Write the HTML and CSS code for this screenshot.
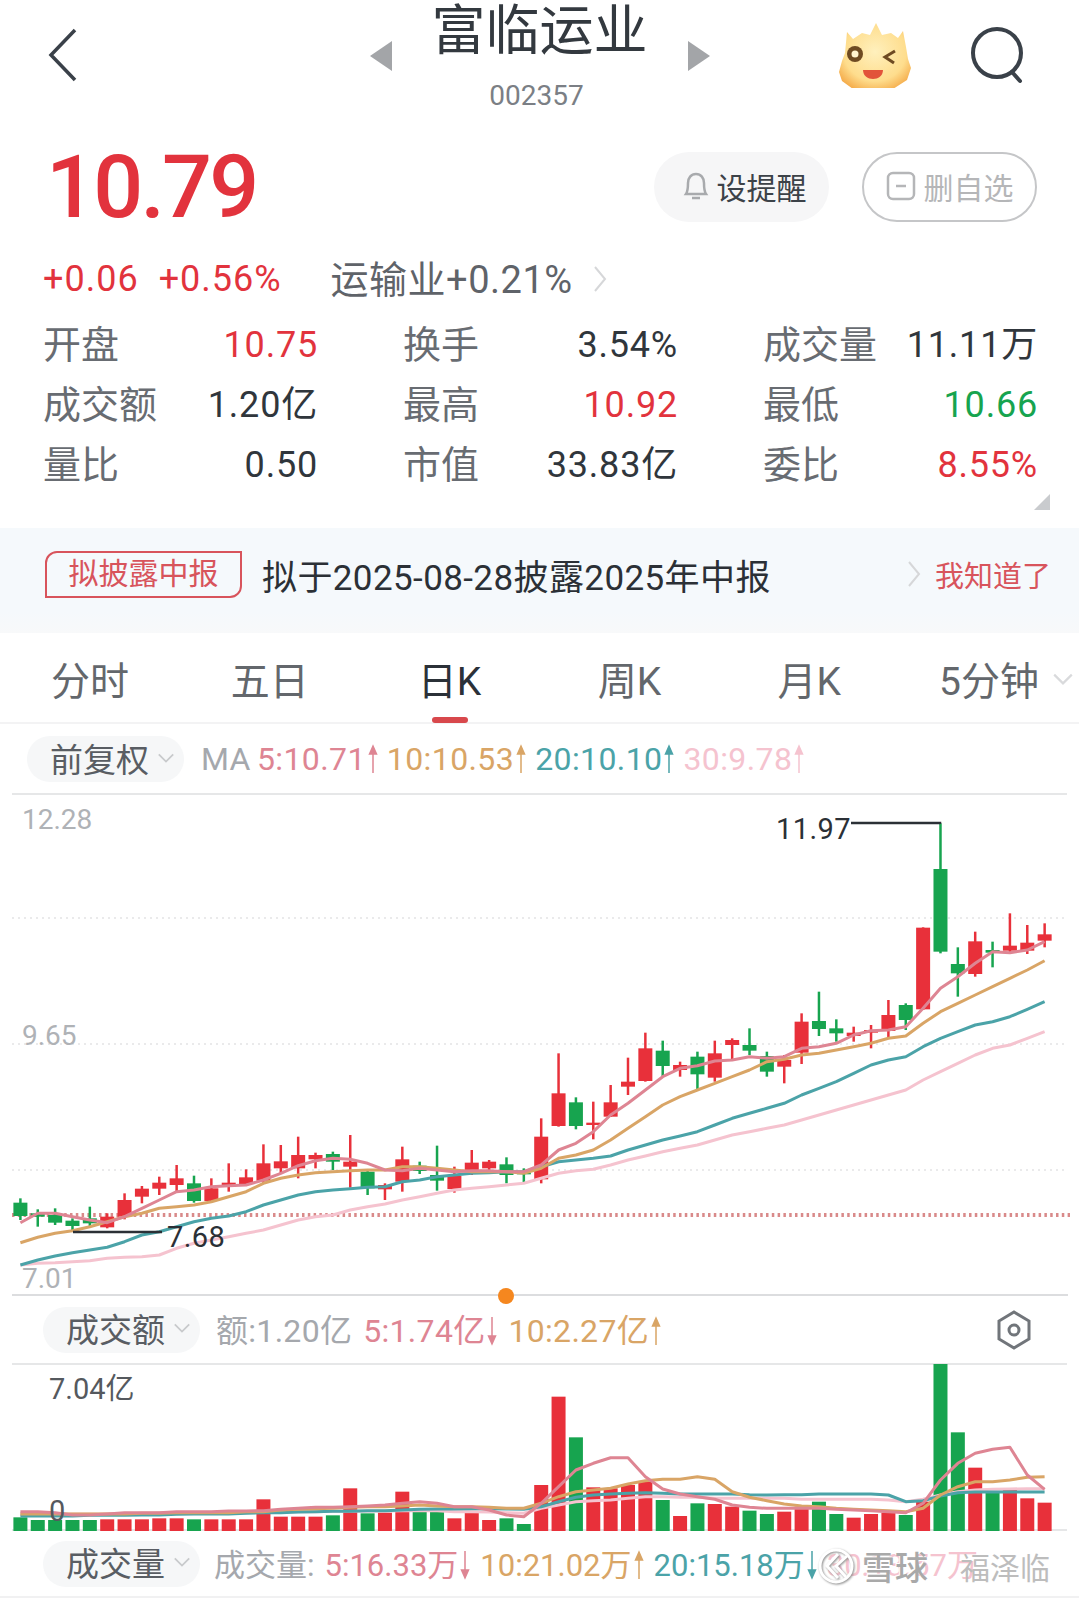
FILE: index.html
```html
<!DOCTYPE html>
<html lang="zh">
  <head>
    <meta charset="UTF-8" />
    <title>富临运业</title>
    <link rel="stylesheet" href="styles.css">
  </head>
  <body>
    <svg class="defs" width="0" height="0">
      <symbol id="up" viewBox="0 0 10 30"><path d="M5 29V3M1.500 10 5 2l3.500 8z" /></symbol>
      <symbol id="down" viewBox="0 0 10 30"><path d="M5 1v26M1.500 20 5 28l3.500-8z" /></symbol>
      <symbol id="caret" viewBox="0 0 20 12"><path d="M2 2l8 8 8-8" /></symbol>
    </svg>

    <div class="page">
      <!-- 顶部标题 -->
      <header class="topbar">
        <svg class="back" width="30" height="54" viewBox="0 0 30 54"><path d="M27 2 3 27l24 25" /></svg>
        <div class="title-box">
          <span class="tri tri-left"></span>
          <div class="title-text">
            <h1>富临运业</h1>
            <p>002357</p>
          </div>
          <span class="tri tri-right"></span>
        </div>
        <div class="top-right">
          <svg class="mascot" width="74" height="66" viewBox="0 0 74 66">
            <defs>
              <radialGradient id="face" cx="50%" cy="42%" r="62%">
                <stop offset="0" stop-color="#fff0bd" />
                <stop offset="0.7" stop-color="#fedd8d" />
                <stop offset="1" stop-color="#f5ad4c" />
              </radialGradient>
            </defs>
            <path fill="url(#face)" d="M9 10l6 7 9-6 8 2 6-12 6 12 9-2 7 5 5-7 3 16 2 12 3 9-4 12-14 9-20 2-20-2-11-8-3-9 3-11 3-8z" />
            <circle cx="17" cy="32" r="8" fill="#6e4a22" />
            <circle cx="17" cy="32" r="3.500" fill="#fff3d0" />
            <path class="wink" d="M57 29 47 35l9 6" />
            <path fill="#e2533a" d="M25 48h20c0 6-5 9-10 9s-10-3-10-9z" />
          </svg>
          <svg class="search" width="54" height="58" viewBox="0 0 54 58"><circle cx="27" cy="27" r="24" /><path d="M42 46l8 9" /></svg>
        </div>
      </header>

      <!-- 行情 -->
      <section class="quote">
        <div class="price-row">
          <div class="price">10.79</div>
          <div class="btns">
            <div class="pill pill-remind">
              <svg width="26" height="32" viewBox="0 0 26 32"><path d="M3 24c2-3 2-6 2-11 0-5 3-9 8-9s8 4 8 9c0 5 0 8 2 11zM9 28h8" /></svg>
              设提醒
            </div>
            <div class="pill pill-del">
              <svg width="30" height="30" viewBox="0 0 30 30"><rect x="2" y="2" width="26" height="26" rx="5" /><path d="M10 15h10" /></svg>
              删自选
            </div>
          </div>
        </div>
        <div class="change-row">
          <span class="up">+0.06</span>
          <span class="up">+0.56%</span>
          <span class="sector">运输业+0.21%</span>
          <svg class="more" width="14" height="28" viewBox="0 0 14 28"><path d="M2 2l10 12L2 26" /></svg>
        </div>
        <div class="stats">
          <div class="stat"><label>开盘</label><b class="up">10.75</b></div>
          <div class="stat"><label>换手</label><b>3.54%</b></div>
          <div class="stat"><label>成交量</label><b>11.11万</b></div>
          <div class="stat"><label>成交额</label><b>1.20亿</b></div>
          <div class="stat"><label>最高</label><b class="up">10.92</b></div>
          <div class="stat"><label>最低</label><b class="down">10.66</b></div>
          <div class="stat"><label>量比</label><b>0.50</b></div>
          <div class="stat"><label>市值</label><b>33.83亿</b></div>
          <div class="stat"><label>委比</label><b class="up">8.55%</b></div>
        </div>
        <div class="fold"></div>
      </section>

      <!-- 提示条 -->
      <section class="notice">
        <span class="tag">拟披露中报</span>
        <span class="notice-msg">拟于2025-08-28披露2025年中报</span>
        <svg class="more" width="14" height="28" viewBox="0 0 14 28"><path d="M2 2l10 12L2 26" /></svg>
        <span class="notice-ok">我知道了</span>
      </section>

      <nav class="tabs">
        <div class="tab">分时</div>
        <div class="tab">五日</div>
        <div class="tab active">日K</div>
        <div class="tab">周K</div>
        <div class="tab">月K</div>
        <div class="tab">5分钟<svg class="tab-caret"><use href="#caret" /></svg></div>
      </nav>

      <div class="ma-row">
        <div class="select select-ma">前复权<svg class="caret"><use href="#caret" /></svg></div>
        <div class="legend">
          <span class="c-gray ma-name">MA</span>
          <span class="c-5">5:10.71<svg class="arr"><use href="#up" /></svg></span>
          <span class="c-10">10:10.53<svg class="arr"><use href="#up" /></svg></span>
          <span class="c-20">20:10.10<svg class="arr"><use href="#up" /></svg></span>
          <span class="c-30">30:9.78<svg class="arr"><use href="#up" /></svg></span>
        </div>
      </div>

      <svg id="kline" class="chart chart-k" width="1079" height="503" viewBox="0 793 1079 503"></svg>

      <div class="sub-row">
        <span class="dot"></span>
        <div class="select">成交额<svg class="caret"><use href="#caret" /></svg></div>
        <div class="legend legend-amount">
          <span class="c-gray">额:1.20亿</span>
          <span class="c-5">5:1.74亿<svg class="arr"><use href="#down" /></svg></span>
          <span class="c-10">10:2.27亿<svg class="arr"><use href="#up" /></svg></span>
        </div>
        <svg class="hex" width="36" height="40" viewBox="0 0 36 40"><path d="M18 2l15 9v18l-15 9-15-9V11z" /><circle cx="18" cy="20" r="5" /></svg>
      </div>

      <svg id="volume" class="chart" width="1079" height="168" viewBox="0 1363 1079 168"></svg>

      <div class="sub-row sub-row-last">
        <div class="select">成交量<svg class="caret"><use href="#caret" /></svg></div>
        <div class="legend legend-vol">
          <span class="c-gray">成交量:</span>
          <span class="c-5">5:16.33万<svg class="arr"><use href="#down" /></svg></span>
          <span class="c-10">10:21.02万<svg class="arr"><use href="#up" /></svg></span>
          <span class="c-20">20:15.18万<svg class="arr"><use href="#down" /></svg></span>
          <span class="c-30">30:13.57万</span>
        </div>
        <!-- 水印 -->
        <div class="watermark">
          <svg width="38" height="38" viewBox="0 0 38 38"><circle cx="19" cy="19" r="16" /><path d="M21 7 10 19l11 12M30 9 19 19l10 11" /></svg>
          <span class="wm-brand">雪球</span>
          <span class="wm-name">福泽临</span>
        </div>
      </div>
    </div>

    <script src="chart.js"></script>
  </body>
</html>
```

FILE: styles.css
```css
* {
  box-sizing: border-box;
}
body {
  margin: 0;
  background: #fff;
  font-family: Roboto, "Noto Sans CJK SC", sans-serif;
  color: #30363c;
}
.defs {
  position: absolute;
}
.page {
  width: 1079px;
  overflow: hidden;
}
.up {
  color: #e2333d;
}
.down {
  color: #17a44f;
}

/* 顶部 */
.topbar {
  height: 125px;
  display: grid;
  grid-template-columns: 1fr auto 1fr;
}
.back {
  margin: 28px 0 0 48px;
}
.back path {
  fill: none;
  stroke: #3a4149;
  stroke-width: 3.500;
}
.title-box {
  display: flex;
  gap: 40px;
  align-items: flex-start;
}
.tri {
  width: 0;
  height: 0;
  margin-top: 41px;
  border-top: 15px solid transparent;
  border-bottom: 15px solid transparent;
}
.tri-left {
  border-right: 22px solid #a3a5a8;
}
.tri-right {
  border-left: 22px solid #a3a5a8;
}
.title-text {
  text-align: center;
  padding-top: 2px;
}
.title-text h1 {
  margin: 0;
  font-size: 54px;
  line-height: 60px;
  font-weight: 400;
  color: #33393f;
}
.title-text p {
  margin: 18px 6px 0 0;
  font-size: 28px;
  line-height: 32px;
  color: #7b7f85;
}
.top-right {
  display: flex;
  justify-content: flex-end;
  gap: 58px;
  padding: 22px 55px 0 0;
  align-items: flex-start;
}
.wink {
  fill: none;
  stroke: #6e4a22;
  stroke-width: 3;
}
.search {
  margin-top: 4px;
}
.search circle,
.search path {
  fill: none;
  stroke: #3a4149;
  stroke-width: 4;
  stroke-linecap: round;
}

/* 行情 */
.quote {
  height: 403px;
  padding-top: 27px;
}
.price-row {
  display: flex;
  justify-content: space-between;
  align-items: center;
  height: 70px;
  padding: 0 42px 0 46px;
}
.price {
  font-size: 88px;
  font-weight: 500;
  line-height: 70px;
  letter-spacing: -2.800px;
  color: #e2333d;
}
.btns {
  display: flex;
  gap: 33px;
}
.pill {
  width: 175px;
  height: 70px;
  border-radius: 35px;
  display: flex;
  align-items: center;
  justify-content: center;
  gap: 8px;
  padding-bottom: 3px;
  font-size: 30px;
}
.pill-remind {
  background: #f6f6f7;
  color: #3c4248;
  padding-left: 6px;
}
.pill-remind path {
  fill: none;
  stroke: #a8aaad;
  stroke-width: 2.500;
}
.pill-del {
  border: 2px solid #c5c6c8;
  color: #b5b6b8;
}
.pill-del rect,
.pill-del path {
  fill: none;
  stroke: #b5b6b8;
  stroke-width: 2.500;
}
.change-row {
  height: 58px;
  margin-top: 28px;
  padding-left: 43px;
  display: flex;
  align-items: center;
  gap: 20px;
  font-size: 36px;
  letter-spacing: 1px;
}
.sector {
  margin: 0 0 6px 29px;
  font-size: 38px;
  letter-spacing: .5px;
  color: #5f6369;
}
.more path {
  fill: none;
  stroke: #d6d7d9;
  stroke-width: 2;
}
.stats {
  display: grid;
  grid-template-columns: repeat(3, 274px);
  column-gap: 86px;
  padding-left: 43px;
  margin-top: 7px;
}
.stat {
  height: 60px;
  display: flex;
  justify-content: space-between;
  align-items: center;
}
.stat label {
  margin-bottom: 8px;
  font-size: 38px;
  color: #686c72;
}
.stat b {
  margin-right: -1px;
  font-size: 36px;
  line-height: 40px;
  font-weight: 400;
  letter-spacing: .8px;
}
.fold {
  width: 16px;
  height: 16px;
  margin: -1px 0 0 1034px;
  background: #c9cbce;
  clip-path: polygon(100% 0, 100% 100%, 0 100%);
}

/* 提示条 */
.notice {
  height: 105px;
  display: flex;
  align-items: center;
  padding: 0 28px 13px 45px;
  background: linear-gradient(#f5f9fc 80%, #f8f9fa);
}
.tag {
  width: 197px;
  height: 47px;
  border: 2px solid #d8545c;
  border-radius: 12px 0 12px 0;
  text-align: center;
  line-height: 41px;
  font-size: 30px;
  color: #d8545c;
}
.notice-msg {
  margin-left: 20px;
  font-size: 35px;
  letter-spacing: .4px;
  color: #2b3036;
}
.notice .more {
  margin-left: auto;
}
.notice-ok {
  margin-left: 14px;
  font-size: 29px;
  color: #d8545c;
}

/* tab */
.tabs {
  height: 91px;
  display: grid;
  grid-template-columns: repeat(6, 1fr);
  border-bottom: 2px solid #f3f3f4;
}
.tab {
  position: relative;
  padding-top: 19px;
  text-align: center;
  font-size: 39px;
  line-height: 60px;
  color: #63676c;
}
.tab.active {
  color: #2b3138;
}
.tab.active::after {
  content: "";
  display: block;
  width: 36px;
  height: 6px;
  margin: 5px auto 0;
  border-radius: 3px;
  background: #d8484c;
}
.tab-caret {
  position: absolute;
  right: 5px;
  top: 39px;
  width: 22px;
  height: 14px;
  fill: none;
  stroke: #d9dadc;
  stroke-width: 2;
}

/* 指标行 */
.ma-row {
  height: 69px;
  padding: 1px 0 0 27px;
  display: flex;
  align-items: center;
  gap: 17px;
}
.select {
  width: 157px;
  height: 46px;
  border-radius: 23px;
  background: #f6f7f8;
  display: flex;
  align-items: center;
  padding: 0 0 3px 23px;
  font-size: 33px;
  color: #595d63;
}
.caret {
  width: 18px;
  height: 12px;
  margin-left: 8px;
  fill: none;
  stroke: #c8cacc;
  stroke-width: 2;
}
.legend {
  display: flex;
  gap: 9px;
  font-size: 32px;
  letter-spacing: .4px;
  white-space: nowrap;
}
.ma-name {
  margin-right: -3px;
}
.legend-amount {
  gap: 11px;
  margin: -3px 0 0 -2px;
  letter-spacing: .3px;
}
.legend-vol {
  gap: 10px;
  margin: -2px 0 0 -4px;
  font-size: 31px;
  letter-spacing: 0;
}
.arr {
  width: 10px;
  height: 30px;
  margin-left: 2px;
  vertical-align: -4px;
  fill: currentColor;
  stroke: currentColor;
  stroke-width: 1.500;
}
.c-gray {
  color: #a5a8ad;
}
.c-5 {
  color: #de8593;
}
.c-10 {
  color: #d9a566;
}
.c-20 {
  color: #4ba3a8;
}
.c-30 {
  color: #f5c3cf;
}

/* 图表 */
.chart {
  display: block;
}
.axis-label {
  font-size: 28px;
  fill: #afb2b6;
}
.mark-label {
  font-size: 29px;
  letter-spacing: .4px;
  fill: #2b3036;
}
.vol-label {
  font-size: 29px;
  fill: #55595e;
}
.sub-row {
  position: relative;
  height: 67px;
  padding-left: 43px;
  display: flex;
  align-items: center;
  gap: 18px;
}
.sub-row-last {
  border-bottom: 2px solid #f1f1f2;
}
.dot {
  position: absolute;
  left: 498px;
  top: -8px;
  width: 16px;
  height: 16px;
  border-radius: 50%;
  background: #f5871f;
}
.hex {
  position: absolute;
  right: 47px;
  top: 14px;
}
.hex path,
.hex circle {
  fill: none;
  stroke: #71757a;
  stroke-width: 3;
}
.watermark {
  position: absolute;
  left: 817px;
  top: 11px;
  display: flex;
  align-items: center;
  gap: 7px;
  color: #a9a9a9;
}
.watermark svg {
  filter: drop-shadow(1px 1px 1px #8a8a8a);
}
.watermark circle,
.watermark path {
  fill: none;
  stroke: #fff;
  stroke-width: 3;
}
.wm-brand {
  font-size: 33px;
  font-weight: 500;
  text-shadow: -1px -1px 0 #fff;
}
.wm-name {
  margin-left: 25px;
  font-size: 30px;
  color: #bdbdbd;
}
```

FILE: chart.js
```js
const NS = "http://www.w3.org/2000/svg";
const UP = "#e8303a";
const DOWN = "#17a44f";
const MA_COLORS = ["#f5c3cf", "#4ba3a8", "#d9a566", "#de8593"];

const X0 = 20.4;
const STEP = 17.36;
const BAR_W = 14;

function add(svg, tag, attrs, text) {
  const el = document.createElementNS(NS, tag);
  for (const k in attrs) el.setAttribute(k, attrs[k]);
  if (text) el.textContent = text;
  svg.appendChild(el);
  return el;
}

function xAt(i) {
  return X0 + i * STEP;
}

// 数值按截图读取: [涨跌, 最高, 开, 收, 最低], 前30根和后30根基准不同
const candlesA = [
  [0, 595, 608, 648, 660], [0, 628, 640, 650, 680], [0, 625, 645, 668, 675], [0, 655, 662, 678, 695],
  [0, 620, 655, 670, 680], [1, 640, 650, 682, 685], [1, 580, 600, 650, 658], [1, 558, 566, 590, 610],
  [1, 530, 548, 566, 585], [1, 495, 535, 555, 578], [0, 527, 550, 603, 608], [1, 535, 565, 603, 608],
  [1, 490, 548, 560, 575], [1, 508, 532, 552, 555], [1, 433, 490, 542, 550], [1, 435, 484, 505, 520],
  [1, 410, 465, 505, 535], [1, 458, 465, 478, 505], [0, 455, 462, 485, 510], [1, 405, 485, 500, 563],
  [0, 510, 515, 565, 585], [1, 550, 555, 568, 600], [1, 440, 478, 545, 575], [0, 485, 497, 513, 522],
  [0, 437, 525, 542, 572], [1, 500, 528, 567, 578], [1, 450, 488, 510, 525], [1, 480, 485, 505, 510],
  [0, 472, 493, 525, 550], [0, 505, 517, 522, 548],
];
const candlesB = [
  [1, 955, 1010, 1138, 1150], [1, 760, 880, 978, 980], [0, 892, 907, 978, 988], [1, 905, 968, 975, 1018],
  [1, 855, 907, 950, 950], [1, 773, 845, 860, 885], [1, 698, 745, 843, 845], [0, 722, 752, 798, 828],
  [1, 785, 795, 810, 830], [0, 755, 770, 823, 870], [1, 722, 760, 833, 845], [1, 715, 720, 735, 778],
  [0, 685, 735, 752, 765], [0, 755, 768, 815, 830], [1, 765, 780, 800, 850], [1, 640, 665, 758, 792],
  [0, 575, 663, 687, 708], [0, 658, 685, 700, 725], [1, 680, 698, 708, 725], [1, 675, 690, 698, 745],
  [1, 600, 645, 693, 715], [0, 610, 615, 660, 690], [1, 382, 383, 628, 630], [0, 70, 207, 455, 460],
  [0, 442, 492, 520, 590], [1, 395, 424, 522, 530], [0, 425, 450, 458, 502], [1, 340, 437, 452, 460],
  [1, 375, 428, 452, 462], [1, 370, 403, 422, 442],
];

const klineMA = [
  {
    a: [795, 790, 788, 785, 782, 775, 772, 770, 765, 745, 730, 720, 710, 700, 690, 675, 660, 650, 645, 630, 620, 612, 600, 590, 580, 570, 565, 560, 555, 550],
    b: [1135, 1120, 1112, 1108, 1095, 1080, 1068, 1055, 1045, 1035, 1020, 1005, 995, 985, 975, 960, 945, 930, 915, 900, 885, 870, 840, 815, 790, 765, 745, 735, 715, 695],
  },
  {
    a: [795, 780, 768, 758, 750, 742, 725, 705, 695, 680, 665, 655, 648, 635, 615, 600, 585, 575, 570, 566, 562, 560, 545, 540, 530, 525, 520, 518, 515, 515],
    b: [1100, 1085, 1080, 1075, 1068, 1050, 1035, 1020, 1008, 995, 975, 955, 940, 925, 910, 885, 865, 845, 820, 795, 780, 770, 740, 715, 695, 675, 665, 650, 628, 605],
  },
  {
    a: [728, 712, 700, 692, 680, 665, 650, 640, 625, 620, 615, 605, 590, 575, 550, 535, 525, 518, 515, 512, 510, 510, 500, 500, 505, 510, 515, 515, 515, 520],
    b: [1105, 1075, 1065, 1050, 1020, 985, 950, 915, 890, 870, 850, 830, 810, 785, 778, 765, 760, 750, 740, 730, 715, 708, 670, 635, 610, 585, 560, 535, 510, 482],
  },
  {
    a: [668, 640, 640, 650, 660, 668, 650, 625, 600, 575, 570, 560, 557, 555, 540, 520, 497, 482, 475, 478, 490, 510, 512, 505, 510, 515, 512, 512, 515, 515],
    b: [1095, 1050, 1030, 995, 945, 910, 870, 830, 805, 797, 783, 780, 770, 775, 770, 745, 740, 730, 705, 692, 690, 680, 625, 565, 530, 490, 455, 458, 450, 425],
  },
];

// 成交额柱: [涨跌, 柱顶]
const volBars = [
  [0, 682], [0, 690], [0, 690], [0, 690], [0, 690], [1, 688], [1, 688], [1, 688], [1, 685], [1, 685],
  [0, 688], [1, 688], [1, 688], [1, 688], [1, 628], [1, 680], [1, 680], [1, 680], [0, 676], [1, 595],
  [0, 670], [1, 668], [1, 605], [0, 665], [0, 665], [1, 685], [1, 667], [1, 690], [0, 685], [0, 702],
  [1, 585], [1, 320], [0, 442], [1, 592], [1, 595], [1, 585], [1, 575], [0, 630], [1, 678], [0, 640],
  [1, 642], [1, 650], [0, 662], [0, 672], [1, 665], [1, 650], [0, 635], [0, 672], [1, 683], [1, 672],
  [1, 668], [0, 675], [1, 635], [0, 222], [0, 427], [1, 533], [0, 605], [1, 600], [1, 625], [1, 638],
];

const volMA = [
  [672, 672, 672, 672, 672, 672, 672, 672, 670, 668, 668, 668, 668, 668, 666, 666, 665, 665, 664, 664, 663, 663, 662, 662, 662, 665, 665, 666, 668, 670,
    655, 645, 635, 632, 630, 625, 620, 620, 622, 622, 625, 625, 625, 625, 625, 628, 628, 628, 628, 628, 630, 635, 628, 615, 605, 600, 598, 597, 596, 596],
  [678, 678, 678, 678, 676, 676, 676, 675, 675, 673, 672, 672, 672, 670, 668, 668, 666, 665, 664, 664, 662, 662, 660, 658, 657, 657, 656, 656, 657, 658,
    650, 635, 622, 615, 612, 610, 608, 610, 612, 612, 612, 612, 614, 615, 614, 614, 612, 612, 612, 612, 615, 635, 632, 618, 608, 606, 606, 606, 606, 606],
  [672, 672, 672, 672, 672, 672, 672, 670, 670, 668, 668, 668, 668, 665, 665, 660, 658, 656, 655, 652, 650, 650, 648, 645, 648, 650, 650, 652, 655, 655,
    640, 620, 605, 600, 595, 582, 572, 568, 568, 560, 568, 605, 622, 632, 642, 648, 650, 655, 658, 660, 662, 665, 655, 615, 590, 575, 575, 570, 562, 560],
  [665, 665, 668, 675, 675, 672, 668, 668, 668, 665, 665, 665, 663, 663, 662, 658, 655, 652, 652, 650, 648, 645, 640, 635, 640, 650, 650, 660, 675, 680,
    640, 590, 540, 520, 503, 503, 560, 597, 612, 620, 628, 645, 652, 655, 655, 655, 655, 658, 660, 662, 665, 668, 640, 570, 520, 490, 478, 472, 555, 598],
];

function drawKline() {
  const svg = document.getElementById("kline");
  add(svg, "line", { x1: 12, x2: 1067, y1: 794, y2: 794, stroke: "#e6e7e8", "stroke-width": 2 });
  [918, 1044, 1170].forEach((y) => {
    add(svg, "line", { x1: 12, x2: 1067, y1: y, y2: y, stroke: "#e3e4e5", "stroke-width": 1.5, "stroke-dasharray": "2 4" });
  });
  add(svg, "line", { x1: 12, x2: 1068, y1: 1295, y2: 1295, stroke: "#dcdddf", "stroke-width": 2 });
  add(svg, "line", { x1: 12, x2: 1070, y1: 1215, y2: 1215, stroke: "#d98a8a", "stroke-width": 4, "stroke-dasharray": "2.500 3.300" });

  const candles = candlesA.map((c) => [c[0], ...c.slice(1).map((v) => 1000 + v / 3)])
    .concat(candlesB.map((c) => [c[0], ...c.slice(1).map((v) => 800 + v / 3)]));
  candles.forEach((c, i) => {
    const color = c[0] ? UP : DOWN;
    const x = xAt(i);
    add(svg, "line", { x1: x, x2: x, y1: c[1], y2: c[4], stroke: color, "stroke-width": 2.500 });
    add(svg, "rect", { x: x - BAR_W / 2, y: c[2], width: BAR_W, height: Math.max(c[3] - c[2], 2), fill: color });
  });

  klineMA.forEach((ma, n) => {
    const ys = ma.a.map((v) => 1000 + v / 3).concat(ma.b.map((v) => 800 + v / 3));
    const pts = ys.map((y, i) => `${xAt(i).toFixed(1)},${y.toFixed(1)}`).join(" ");
    add(svg, "polyline", { points: pts, fill: "none", stroke: MA_COLORS[n], "stroke-width": 3, "stroke-linejoin": "round" });
  });

  // 最高最低标注
  add(svg, "path", { d: "M851 823H940v1", fill: "none", stroke: "#2b3036", "stroke-width": 2.500 });
  add(svg, "path", { d: "M73 1232H162", fill: "none", stroke: "#2b3036", "stroke-width": 2.500 });
  add(svg, "text", { x: 776, y: 839, class: "mark-label" }, "11.97");
  add(svg, "text", { x: 167, y: 1247, class: "mark-label" }, "7.68");

  add(svg, "text", { x: 22, y: 829, class: "axis-label" }, "12.28");
  add(svg, "text", { x: 22, y: 1045, class: "axis-label" }, "9.65");
  add(svg, "text", { x: 22, y: 1288, class: "axis-label" }, "7.01");
}

function drawVolume() {
  const svg = document.getElementById("volume");
  add(svg, "line", { x1: 12, x2: 1067, y1: 1364, y2: 1364, stroke: "#e6e7e8", "stroke-width": 2 });
  add(svg, "line", { x1: 12, x2: 1067, y1: 1530, y2: 1530, stroke: "#e6e7e8", "stroke-width": 2 });

  volBars.forEach((b, i) => {
    const top = 1290 + b[1] / 3;
    add(svg, "rect", { x: xAt(i) - BAR_W / 2, y: top, width: BAR_W, height: 1531 - top, fill: b[0] ? UP : DOWN });
  });

  volMA.forEach((ma, n) => {
    const pts = ma.map((v, i) => `${xAt(i).toFixed(1)},${(1290 + v / 3).toFixed(1)}`).join(" ");
    add(svg, "polyline", { points: pts, fill: "none", stroke: MA_COLORS[n], "stroke-width": 3, "stroke-linejoin": "round" });
  });

  add(svg, "text", { x: 49, y: 1399, class: "vol-label" }, "7.04亿");
  add(svg, "text", { x: 49, y: 1521, class: "vol-label" }, "0");
}

drawKline();
drawVolume();
```
